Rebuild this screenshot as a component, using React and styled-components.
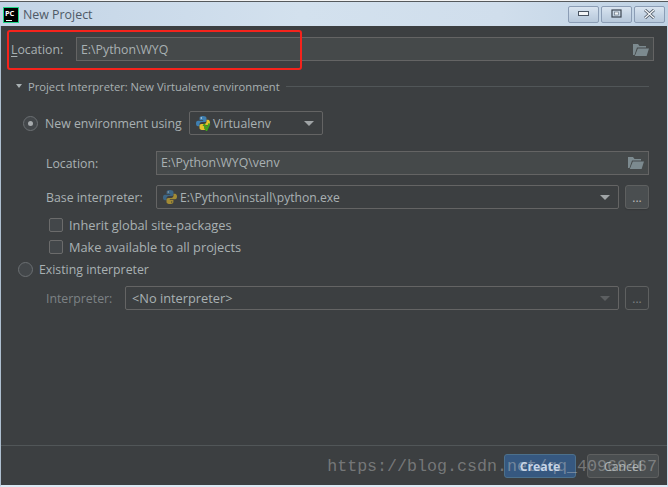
import React from "react";
import styled, { createGlobalStyle } from "styled-components";

const GlobalStyle = createGlobalStyle`
    html, body {
        margin: 0;
        padding: 0;
        background: #e8f2fb;
    }
    * {
        box-sizing: border-box;
    }
`;

const Window = styled.div`
    position: relative;
    width: 668px;
    height: 487px;
    display: flex;
    flex-direction: column;
    overflow: hidden;
    border-top: 1px solid #f2f2f2;
    font-family: "Open Sans", "Noto Sans", sans-serif;
    font-size: 12.3px;
    color: #a9b1b3;
`;

const TitleBar = styled.div`
    height: 25px;
    flex: none;
    display: flex;
    align-items: center;
    padding: 1px 3px 0 3px;
    gap: 4px;
    border-top: 1px solid #55595c;
    background: linear-gradient(90deg, #c3d4e6 0%, #d3e1ee 45%, #d0deec 75%, #bfd2e4 100%);
    color: #4f5a66;
    font-size: 12.4px;
`;

const Logo = styled.div`
    width: 16px;
    height: 16px;
    flex: none;
    background: #000;
    border: 1px solid #21d789;
    color: #fff;
    font-size: 7.5px;
    font-weight: 700;
    line-height: 8px;
    padding: 1px 0 0 1px;
    position: relative;
    letter-spacing: -0.3px;

    &::after {
        content: "";
        position: absolute;
        left: 2px;
        bottom: 1px;
        width: 6px;
        height: 1px;
        background: #fff;
    }
`;

const TitleText = styled.span`
    flex: 1;
`;

const WinButtons = styled.div`
    display: flex;
    gap: 2px;
    margin-top: -1px;
`;

const WinButton = styled.div`
    width: 31px;
    height: 17px;
    border: 1px solid #8b9db5;
    border-radius: 2px;
    background: linear-gradient(180deg, #d9e4f0 0%, #c6d5e5 50%, #b7c8da 100%);
    display: flex;
    align-items: center;
    justify-content: center;
`;

const Body = styled.div`
    flex: 1;
    display: flex;
    flex-direction: column;
    background: #3c3f41;
    border-left: 1px solid #aebfd0;
    border-right: 1px solid #c5d6e6;
    border-bottom: 2px solid #dbe9f5;
    min-height: 0;
`;

const Content = styled.div`
    flex: 1;
    padding: 11px 13px 0 10px;
`;

const Row = styled.div`
    display: flex;
    align-items: center;
    height: 24px;
    margin-left: ${(p) => p.$indent || 0}px;
    margin-top: ${(p) => p.$top || 0}px;
    margin-right: ${(p) => p.$right || 0}px;
`;

const Label = styled.label`
    width: ${(p) => p.$width}px;
    flex: none;
    color: ${(p) => (p.$dim ? "#7d8285" : "#a9b1b3")};

    u {
        text-decoration-thickness: 1px;
        text-underline-offset: 2px;
    }
`;

const TextField = styled.div`
    flex: 1;
    height: 24px;
    display: flex;
    align-items: center;
    justify-content: space-between;
    padding: ${(p) => (p.$low ? "1px 4px 0 4px" : "0 4px 1px 4px")};
    background: #45494a;
    border: 1px solid #646464;
    color: #a9b1b3;
`;

const Combo = styled.div`
    flex: ${(p) => (p.$width ? "none" : 1)};
    width: ${(p) => (p.$width ? `${p.$width}px` : "auto")};
    height: 24px;
    display: flex;
    align-items: center;
    gap: 2px;
    padding: 0 8px 0 5px;
    background: #3c3f41;
    border: 1px solid #646464;
    border-radius: 2px;
    color: #a9b1b3;
`;

const ComboText = styled.span`
    flex: 1;
    white-space: nowrap;
    font-size: ${(p) => p.$size || 12.3}px;
    padding-left: ${(p) => p.$pad || 0}px;
`;

const Caret = styled.div`
    width: 0;
    height: 0;
    border-left: 5px solid transparent;
    border-right: 5px solid transparent;
    border-top: 5px solid ${(p) => (p.$dim ? "#5c5f61" : "#a0a4a6")};
`;

const MoreButton = styled.div`
    width: 24px;
    height: 24px;
    flex: none;
    margin-left: 6px;
    display: flex;
    align-items: flex-end;
    justify-content: center;
    padding-bottom: 5px;
    line-height: 10px;
    font-size: 12px;
    border-radius: 3px;
    border: 1px solid #5e6060;
    background: ${(p) => (p.$dim ? "#3c3f41" : "#4a4e50")};
    box-shadow: ${(p) => (p.$dim ? "none" : "0 1px 1px #35383a")};
    color: ${(p) => (p.$dim ? "#7d8285" : "#bbbbbb")};
`;

const Section = styled.div`
    display: flex;
    align-items: center;
    height: 16px;
    margin: 17px 5px 0 5px;
    gap: 4px;
    white-space: nowrap;
    font-size: 11.2px;
`;

const SectionLine = styled.div`
    flex: 1;
    height: 1px;
    background: #515658;
    margin-left: 2px;
`;

const SectionCaret = styled.div`
    width: 0;
    height: 0;
    flex: none;
    margin-right: 2px;
    border-left: 3.5px solid transparent;
    border-right: 3.5px solid transparent;
    border-top: 4px solid #a9b1b3;
`;

const Radio = styled.div`
    width: 15px;
    height: 15px;
    flex: none;
    border-radius: 50%;
    border: 1px solid #6b6f72;
    background: #43474a;
    display: flex;
    align-items: center;
    justify-content: center;
    margin-right: ${(p) => p.$gap}px;

    &::after {
        content: "";
        display: ${(p) => (p.$on ? "block" : "none")};
        width: 5px;
        height: 5px;
        border-radius: 50%;
        background: #a7abad;
    }
`;

const CheckRow = styled.div`
    display: flex;
    align-items: center;
    height: 16px;
    margin-left: 38px;
    margin-top: ${(p) => p.$top}px;
    gap: 6px;
    font-size: 12.8px;
`;

const Check = styled.div`
    width: 14px;
    height: 14px;
    flex: none;
    border: 1px solid #6b6b6b;
    border-radius: 2px;
    background: #43474a;
`;

const Footer = styled.div`
    height: 40px;
    flex: none;
    border-top: 1px solid #515658;
    display: flex;
    justify-content: flex-end;
    align-items: flex-start;
    padding: 8px 8px 0 0;
    gap: 11px;
`;

const Button = styled.div`
    width: 72px;
    height: 24px;
    display: flex;
    align-items: center;
    justify-content: center;
    border-radius: 3px;
    font-weight: ${(p) => (p.$primary ? 700 : 400)};
    color: ${(p) => (p.$primary ? "#c5d5e8" : "#a9b1b3")};
    background: ${(p) => (p.$primary ? "#365880" : "#4a4e50")};
    border: 1px solid ${(p) => (p.$primary ? "#4c708c" : "#5e6060")};
`;

const Annotation = styled.div`
    position: absolute;
    left: 7px;
    top: 29px;
    width: 295px;
    height: 40px;
    border: 2px solid #f5231c;
    border-radius: 3px;
    pointer-events: none;
`;

const Watermark = styled.div`
    position: absolute;
    right: 11px;
    bottom: 8px;
    font-family: "Liberation Mono", "DejaVu Sans Mono", monospace;
    font-size: 16.67px;
    line-height: 24px;
    white-space: nowrap;
    color: rgba(200, 200, 200, 0.42);
    pointer-events: none;
`;

const FolderIcon = () => (
    <svg width="16" height="13" viewBox="0 0 16 13">
        <path d="M0 1h5l1.500 2H13v1.500H4L1.500 12H0z" fill="#7c8a8f" />
        <path d="M4.800 5.500H16L13.600 13H1.800z" fill="#7c8a8f" />
    </svg>
);

const PythonIcon = ({ dim, venv }) => (
    <svg width="16" height="16" viewBox="0 0 16 16" style={{ flex: "none", opacity: dim ? 0.62 : 1 }}>
        <path d="M8 1C5 1 4.600 2 4.600 3.200V5h3.600v.7H3C1.500 5.700 1 7 1 8.400s.6 2.800 2 2.800h1.500V9.200c0-1.200 1-2.200 2.200-2.200h3c1 0 1.800-.8 1.800-1.800V3.100C11.500 1.800 10 1 8 1z" fill="#3f7fb0" />
        <path d="M8 15c3 0 3.400-1 3.400-2.200V11H7.800v-.7H13c1.500 0 2-1.300 2-2.700s-.6-2.800-2-2.800h-1.500v2c0 1.200-1 2.200-2.200 2.200h-3c-1 0-1.800.8-1.800 1.800v2.100C4.500 14.200 6 15 8 15z" fill={venv ? "#e3c22c" : "#e0b92e"} />
        <circle cx="6.300" cy="3" r=".7" fill="#dfe8ee" />
        <circle cx="9.700" cy="13" r=".7" fill="#4a4a30" />
        {venv && <path d="M9 9l2.500 6L14.500 8.500" fill="none" stroke="#3fa31e" strokeWidth="2" />}
    </svg>
);

const App = () => {
    return (
        <React.Fragment>
            <GlobalStyle />
            <Window>
                <TitleBar>
                    <Logo>PC</Logo>
                    <TitleText>New Project</TitleText>
                    <WinButtons>
                        <WinButton>
                            <svg width="12" height="6" viewBox="0 0 12 6">
                                <rect x=".5" y=".5" width="10" height="4" fill="#f4f6f8" stroke="#4a5563" />
                            </svg>
                        </WinButton>
                        <WinButton>
                            <svg width="12" height="10" viewBox="0 0 12 10">
                                <rect x="1" y="1" width="9" height="7" fill="none" stroke="#3c4652" strokeWidth="1.200" />
                                <rect x="3.500" y="3" width="4" height="3" fill="#f0f3f6" stroke="#5d6875" strokeWidth=".6" />
                            </svg>
                        </WinButton>
                        <WinButton>
                            <svg width="13" height="10" viewBox="0 0 13 10">
                                <path d="M2 1l9 8M11 1l-9 8" stroke="#4a5563" strokeWidth="3" />
                                <path d="M2 1l9 8M11 1l-9 8" stroke="#f4f6f8" strokeWidth="1.400" />
                            </svg>
                        </WinButton>
                    </WinButtons>
                </TitleBar>
                <Body>
                    <Content>
                        <Row>
                            <Label $width={65}>
                                <u>L</u>ocation:
                            </Label>
                            <TextField $low>
                                E:\Python\WYQ
                                <FolderIcon />
                            </TextField>
                        </Row>
                        <Section>
                            <SectionCaret />
                            Project Interpreter: New Virtualenv environment
                            <SectionLine />
                        </Section>
                        <Row $indent={12} $top={17}>
                            <Radio $on $gap={7} />
                            <Label $width={144}>New environment using</Label>
                            <Combo $width={134}>
                                <PythonIcon venv />
                                <ComboText>Virtualenv</ComboText>
                                <Caret />
                            </Combo>
                        </Row>
                        <Row $indent={35} $top={16} $right={5}>
                            <Label $width={110}>Location:</Label>
                            <TextField>
                                E:\Python\WYQ\venv
                                <FolderIcon />
                            </TextField>
                        </Row>
                        <Row $indent={35} $top={10} $right={5}>
                            <Label $width={110}>Base interpreter:</Label>
                            <Combo>
                                <PythonIcon dim />
                                <ComboText $size={12.15}>E:\Python\install\python.exe</ComboText>
                                <Caret />
                            </Combo>
                            <MoreButton>...</MoreButton>
                        </Row>
                        <CheckRow $top={8}>
                            <Check />
                            Inherit global site-packages
                        </CheckRow>
                        <CheckRow $top={6}>
                            <Check />
                            Make available to all projects
                        </CheckRow>
                        <Row $indent={7} $top={2}>
                            <Radio $gap={6} />
                            <Label $width={200}>Existing interpreter</Label>
                        </Row>
                        <Row $indent={35} $top={5} $right={5}>
                            <Label $width={79} $dim>
                                Interpreter:
                            </Label>
                            <Combo>
                                <ComboText $size={12.8} $pad={1}>
                                    &lt;No interpreter&gt;
                                </ComboText>
                                <Caret $dim />
                            </Combo>
                            <MoreButton $dim>...</MoreButton>
                        </Row>
                    </Content>
                    <Footer>
                        <Button $primary>Create</Button>
                        <Button>Cancel</Button>
                    </Footer>
                </Body>
                <Annotation />
                <Watermark>https://blog.csdn.net/qq_40969467</Watermark>
            </Window>
        </React.Fragment>
    );
};

export default App;
